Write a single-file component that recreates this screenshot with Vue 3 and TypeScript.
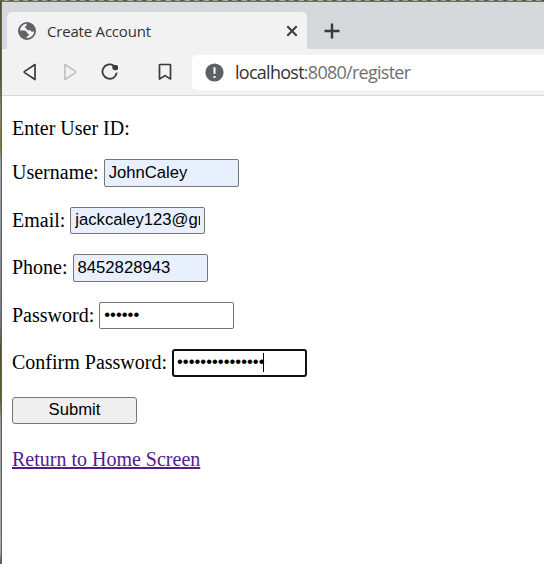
<script setup lang="ts">
import { reactive } from 'vue'

interface Field {
  id: string
  label: string
  type: 'text' | 'password'
  value: string
  filled?: boolean
  focused?: boolean
}

const fields = reactive<Field[]>([
  { id: 'username', label: 'Username:', type: 'text', value: 'JohnCaley', filled: true },
  { id: 'email', label: 'Email:', type: 'text', value: 'jackcaley123@gmail.com', filled: true },
  { id: 'phone', label: 'Phone:', type: 'text', value: '8452828943', filled: true },
  { id: 'password', label: 'Password:', type: 'password', value: 'secret' },
  { id: 'confirm', label: 'Confirm Password:', type: 'password', value: 'secretsecretsec', focused: true },
])
</script>

<template>
  <div class="desktop">
    <div class="window">
      <header class="tabs">
        <div class="tab">
          <svg class="globe" width="18" height="18" viewBox="0 0 18 18">
            <circle cx="9" cy="9" r="8.1" fill="#f2f2f2" stroke="#5f6368" stroke-width="1.8" />
            <path fill="#5f6368" d="M9.6 1C8.4 2.3 8.7 3.6 7.6 4.3 6.6 5 7.1 6.1 8 6.3 9 6.6 8.8 7.9 9.8 8.2 11.2 8.4 12.6 8 13.2 9.2 13.8 10.1 15.4 9.4 17 9.6 17.4 4.6 14.6 1 9.6 1z" />
            <path fill="#5f6368" d="M1 8.6C3.8 8.7 7 8.4 8.4 9.6 9.4 10.5 8.9 11.5 10.1 11.8 11.6 12.1 11 13.7 9.8 14 8.7 14.4 8.6 15.6 8.2 17 3.7 16.6.7 13 1 8.6z" />
          </svg>
          <span class="title">Create Account</span>
          <svg class="close" width="12" height="12" viewBox="0 0 12 12">
            <path d="M1.3 1.3 10.7 10.7M10.7 1.3 1.3 10.7" stroke="#3b3b3b" stroke-width="2" />
          </svg>
        </div>
        <svg class="plus" width="16" height="16" viewBox="0 0 16 16">
          <path d="M8 .5v15M.5 8h15" stroke="#3b3b3b" stroke-width="2.4" />
        </svg>
      </header>

      <nav class="toolbar">
        <svg class="back" width="14" height="18" viewBox="0 0 14 18">
          <path d="M12 1.5 1.6 8.4Q1 9 1.6 9.6L12 16.5Z" fill="none" stroke="#3b3b3b" stroke-width="1.7" stroke-linejoin="round" />
        </svg>
        <svg class="forward" width="14" height="18" viewBox="0 0 14 18">
          <path d="M2 1.5 12.4 8.4Q13 9 12.4 9.6L2 16.5Z" fill="none" stroke="#c1c1c1" stroke-width="1.7" stroke-linejoin="round" />
        </svg>
        <svg class="reload" width="18" height="18" viewBox="0 0 18 18">
          <path d="M12.6 2.5A7.2 7.2 0 1 0 15.8 9.7" fill="none" stroke="#3b3b3b" stroke-width="1.8" />
          <path d="M11.3 3.2Q11.5 2 13.4 2H15.2Q17 2 17 3.8V5.2Q17 7.2 15.2 7.2H13.7Q11.3 7.2 11.3 4.8Z" fill="#3b3b3b" />
        </svg>
        <svg class="bookmark" width="14" height="18" viewBox="0 0 14 18">
          <path d="M1.5 2Q1.5 1.5 2.1 1.5H11.9Q12.5 1.5 12.5 2V16L7 12.6 1.5 16Z" fill="none" stroke="#3b3b3b" stroke-width="1.7" stroke-linejoin="round" />
        </svg>
        <div class="address">
          <svg width="19" height="19" viewBox="0 0 19 19">
            <circle cx="9.5" cy="9.5" r="9.1" fill="#5f6063" />
            <path d="M9.5 4.2v6.5M9.5 13.1v2" stroke="#fff" stroke-width="2" />
          </svg>
          <span class="url"><span class="host">localhost</span>:8080/register</span>
        </div>
      </nav>

      <main class="page">
        <p class="intro">Enter User ID:</p>
        <form @submit.prevent>
          <div v-for="field in fields" :key="field.id" class="row">
            <label :for="field.id">{{ field.label }}</label>
            <div class="control">
              <input
                :id="field.id"
                v-model="field.value"
                :type="field.type"
                :class="{ filled: field.filled, focused: field.focused }"
              />
              <i v-if="field.focused" class="caret"></i>
            </div>
          </div>
          <button type="submit">Submit</button>
        </form>
        <a href="#">Return to Home Screen</a>
      </main>
    </div>
  </div>
</template>

<style>
body {
  margin: 0;
  overflow: hidden;
}
</style>

<style scoped>
.desktop {
  box-sizing: border-box;
  width: 544px;
  height: 564px;
  padding: 1px 0 0 1px;
  background:
    repeating-linear-gradient(90deg, #625f32 0 3px, #a6a38c 5px 8px, #55553e 10px 12px, #a9b0b4 15px 19px) 0 0 / 100% 1px no-repeat,
    linear-gradient(#57522d 0 75px, #8c896e 110px, #777b3d 145px, #a2a5a7 165px, #777a82 320px, #55532c 350px, #626132 400px, #9a9a91 420px, #acada2 550px, #555 564px);
}
.window {
  box-sizing: border-box;
  width: 543px;
  height: 563px;
  border-top: 1px solid #6b6e70;
  border-left: 1px solid #5e6062;
  background: #fff;
}
.tabs {
  display: flex;
  box-sizing: border-box;
  height: 47px;
  padding: 10px 0 0 5px;
  background: #d5d9dc;
}
.tab {
  display: flex;
  align-items: center;
  box-sizing: border-box;
  width: 300px;
  height: 37px;
  padding: 0 9px 0 11px;
  border-radius: 5px 5px 0 0;
  background: #f2f2f2;
}
.globe {
  margin-top: 1px;
}
.title {
  margin-left: 11px;
  font: 15px/20px "Open Sans", sans-serif;
  letter-spacing: -0.2px;
  color: #333;
  white-space: nowrap;
}
.close {
  margin-left: auto;
}
.plus {
  margin: 11px 0 0 17px;
}
.toolbar {
  display: flex;
  align-items: center;
  box-sizing: border-box;
  height: 47px;
  padding-left: 21px;
  border-bottom: 1px solid #d5d7d9;
  background: #f2f2f2;
}
.forward {
  margin-left: 26px;
}
.reload {
  margin-left: 24px;
}
.bookmark {
  margin-left: 39px;
}
.address {
  display: flex;
  flex: 1;
  align-items: center;
  height: 35px;
  margin-left: 20px;
  padding-left: 13px;
  border-radius: 5px 0 0 5px;
  background: #fff;
}
.url {
  margin-left: 11px;
  font: 18px/24px "Open Sans", sans-serif;
  letter-spacing: -0.73px;
  color: #6f6f72;
  white-space: nowrap;
}
.host {
  color: #333;
}
.page {
  padding: 21px 10px 0;
  font: 20px/23px "Liberation Serif", "Times New Roman", serif;
  color: #000;
}
.intro {
  margin: 0 0 19px;
}
.row {
  display: flex;
  align-items: center;
  gap: 5px;
  height: 27.5px;
  margin-bottom: 20px;
}
.control {
  position: relative;
  display: flex;
}
input {
  box-sizing: border-box;
  width: 135px;
  height: 27.5px;
  padding: 0 4px;
  border: 1px solid #767676;
  border-radius: 2px;
  outline: 0;
  background: #fff;
  color: #000;
  font: 16.667px "Liberation Sans", Arial, sans-serif;
}
input[type='password'] {
  padding-bottom: 1px;
}
.filled {
  background: #e8f0fe;
}
.focused {
  padding: 0 3px;
  border: 2px solid #101010;
  border-radius: 3px;
}
.caret {
  position: absolute;
  top: 4px;
  left: 91px;
  width: 1px;
  height: 19px;
  background: #000;
}
button {
  display: block;
  box-sizing: border-box;
  width: 125px;
  height: 27px;
  padding: 0;
  border: 1px solid #767676;
  border-radius: 3px;
  background: #efefef;
  color: #000;
  font: 16.667px "Liberation Sans", Arial, sans-serif;
}
a {
  display: inline-block;
  margin-top: 24px;
  color: #551a8b;
  text-decoration: underline;
}
</style>
